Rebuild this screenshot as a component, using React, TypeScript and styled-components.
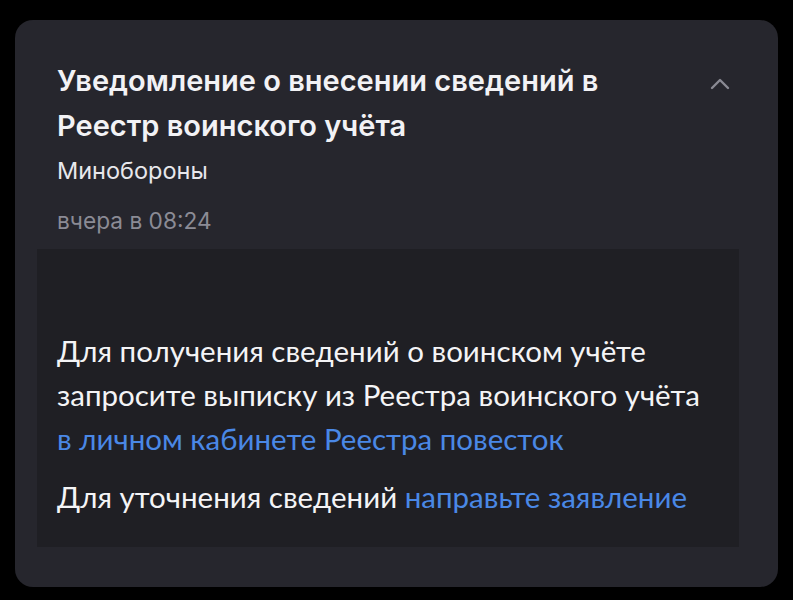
import React from 'react';
import styled, { createGlobalStyle } from 'styled-components';

const GlobalStyle = createGlobalStyle`
  html, body {
    margin: 0;
    padding: 0;
    background: #000;
  }
  body {
    font-family: Inter, "Noto Sans", sans-serif;
    -webkit-font-smoothing: antialiased;
  }
`;

const Page = styled.div`
  width: 793px;
  height: 600px;
  padding: 20px 15px 13px 15px;
  box-sizing: border-box;
  background: #000;
`;

const Card = styled.div`
  height: 100%;
  box-sizing: border-box;
  background: #26262d;
  border-radius: 18px;
  padding: 38px 39px 40px 22px;
  display: flex;
  flex-direction: column;
`;

const Header = styled.div`
  display: flex;
  align-items: flex-start;
  justify-content: space-between;
  padding-left: 20px;
`;

const HeaderText = styled.div`
  display: flex;
  flex-direction: column;
`;

const Title = styled.h1`
  margin: 0;
  font-family: Inter, "Noto Sans", sans-serif;
  font-weight: 600;
  font-size: 29px;
  line-height: 45px;
  letter-spacing: 0;
  color: #f2f2f5;
`;

const Sender = styled.div`
  margin-top: 8px;
  font-size: 23.5px;
  line-height: 30px;
  color: #e8e8ec;
`;

const Time = styled.div`
  margin-top: 20px;
  font-size: 22.7px;
  line-height: 30px;
  color: #8b8b95;
`;

const Chevron = styled.button`
  margin-top: 14px;
  margin-right: 7px;
  background: none;
  border: 0;
  padding: 0;
  width: 24px;
  height: 24px;
  display: flex;
  align-items: center;
  justify-content: center;
  color: #8a8a93;
`;

const Body = styled.div`
  margin-top: 13px;
  background: #1f1f24;
  padding: 80px 20px 28px 20px;
  display: flex;
  flex-direction: column;
  gap: 14px;
`;

const Paragraph = styled.p`
  margin: 0;
  font-family: Lato, "Noto Sans", sans-serif;
  font-size: 29.5px;
  line-height: 44px;
  color: #f4f4f6;
  white-space: nowrap;
`;

const Link = styled.a`
  color: #4a88e6;
  text-decoration: none;
`;

export default function App() {
  return (
    <>
      <GlobalStyle />
      <Page>
        <Card>
          <Header>
            <HeaderText>
              <Title>
                Уведомление о внесении сведений в<br />
                Реестр воинского учёта
              </Title>
              <Sender>Минобороны</Sender>
              <Time>вчера в 08:24</Time>
            </HeaderText>
            <Chevron aria-label="Свернуть">
              <svg width="20" height="12" viewBox="0 0 20 12" fill="none">
                <path d="M2 10L10 2L18 10" stroke="currentColor" strokeWidth="2.4" strokeLinecap="round" strokeLinejoin="round" />
              </svg>
            </Chevron>
          </Header>
          <Body>
            <Paragraph>
              Для получения сведений о воинском учёте<br />
              запросите выписку из Реестра воинского учёта<br />
              <Link href="#">в личном кабинете Реестра повесток</Link>
            </Paragraph>
            <Paragraph>
              Для уточнения сведений <Link href="#">направьте заявление</Link>
            </Paragraph>
          </Body>
        </Card>
      </Page>
    </>
  );
}
